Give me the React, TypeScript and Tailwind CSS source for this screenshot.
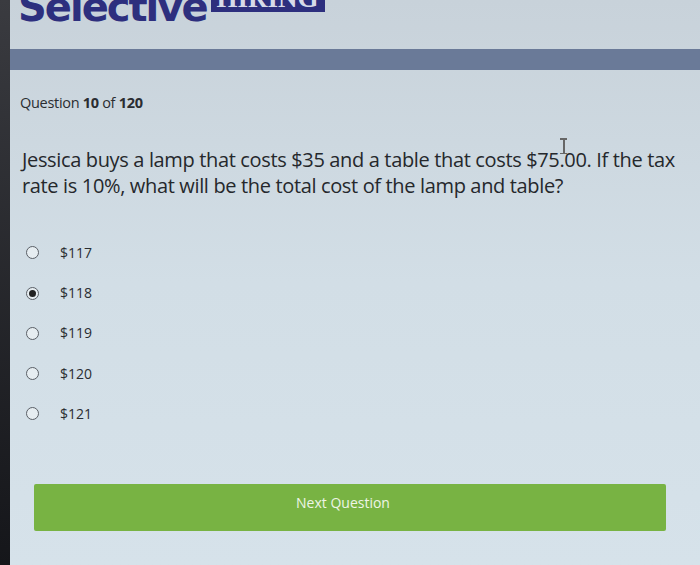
import React from "react";

const OPTIONS = [
  { label: "$117" },
  { label: "$118", checked: true },
  { label: "$119" },
  { label: "$120" },
  { label: "$121" },
];

function Radio({ checked }: { checked?: boolean }) {
  return (
    <span className="flex h-[13px] w-[13px] items-center justify-center rounded-full border-[1.5px] border-[#5a5f66] bg-[#e6edf1]">
      {checked && <span className="h-[7px] w-[7px] rounded-full bg-[#222]" />}
    </span>
  );
}

export default function App() {
  return (
    <div
      className="flex h-[565px] w-[700px] overflow-hidden bg-[#d3dee6] text-[#2a2d31]"
      style={{ fontFamily: '"Open Sans", "Noto Sans", sans-serif' }}
    >
      {/* screen bezel */}
      <div className="w-[10px] shrink-0 bg-gradient-to-b from-[#3a3b40] to-[#15161a]" />

      <div className="flex flex-1 flex-col bg-gradient-to-b from-[#c8d2da] via-[#d2dee6] to-[#d6e2ea]">
        {/* logo, cut off at the top */}
        <div className="flex h-[22px] items-end gap-[4px] overflow-hidden pl-[8px]">
          <span
            className="-mb-[5px] text-[40px] font-black leading-none tracking-[-2px] text-[#2d2f7e]"
            style={{ fontFamily: '"DejaVu Sans", sans-serif' }}
          >
            Selective
          </span>
          <span
            className="mb-[10px] bg-[#2d2f7e] px-[6px] pt-[2px] text-[27px] font-bold leading-none text-[#d7dbe9]"
            style={{ fontFamily: '"Liberation Serif", serif' }}
          >
            HIRING
          </span>
        </div>

        <div className="mt-[27px] h-[21px] bg-[#6a7a98]" />

        <div className="relative px-[10px] pt-[22px]">
          <p className="text-[14.5px] tracking-[-0.3px]">
            Question <b className="font-bold">10</b> of <b className="font-bold">120</b>
          </p>

          <p className="mt-[33px] pl-[2px] text-[20px] leading-[26px] tracking-[-0.35px] text-[#25282c]">
            Jessica buys a lamp that costs $35 and a table that costs $75.00. If the tax rate is 10%, what
            will be the total cost of the lamp and table?
          </p>

          {/* text cursor */}
          <span className="absolute left-[553px] top-[68px] h-[16px] w-[1.5px] bg-[#666]">
            <span className="absolute -left-[3px] top-0 h-[1.5px] w-[7px] bg-[#666]" />
            <span className="absolute -left-[3px] bottom-0 h-[1.5px] w-[7px] bg-[#666]" />
          </span>

          <div className="mt-[46px] flex flex-col gap-[24.25px] pl-[6px]">
            {OPTIONS.map((o) => (
              <label key={o.label} className="flex items-center gap-[21px] text-[14px] leading-[16px]">
                <Radio checked={o.checked} />
                <span>{o.label}</span>
              </label>
            ))}
          </div>

          <button
            type="button"
            className="mt-[62px] ml-[14px] flex h-[47px] w-[632px] items-center justify-center rounded-[2px] bg-[#78b343] pb-[10px] pr-[14px] text-[14px] text-[#eef5e6]"
          >
            Next Question
          </button>
        </div>
      </div>
    </div>
  );
}
